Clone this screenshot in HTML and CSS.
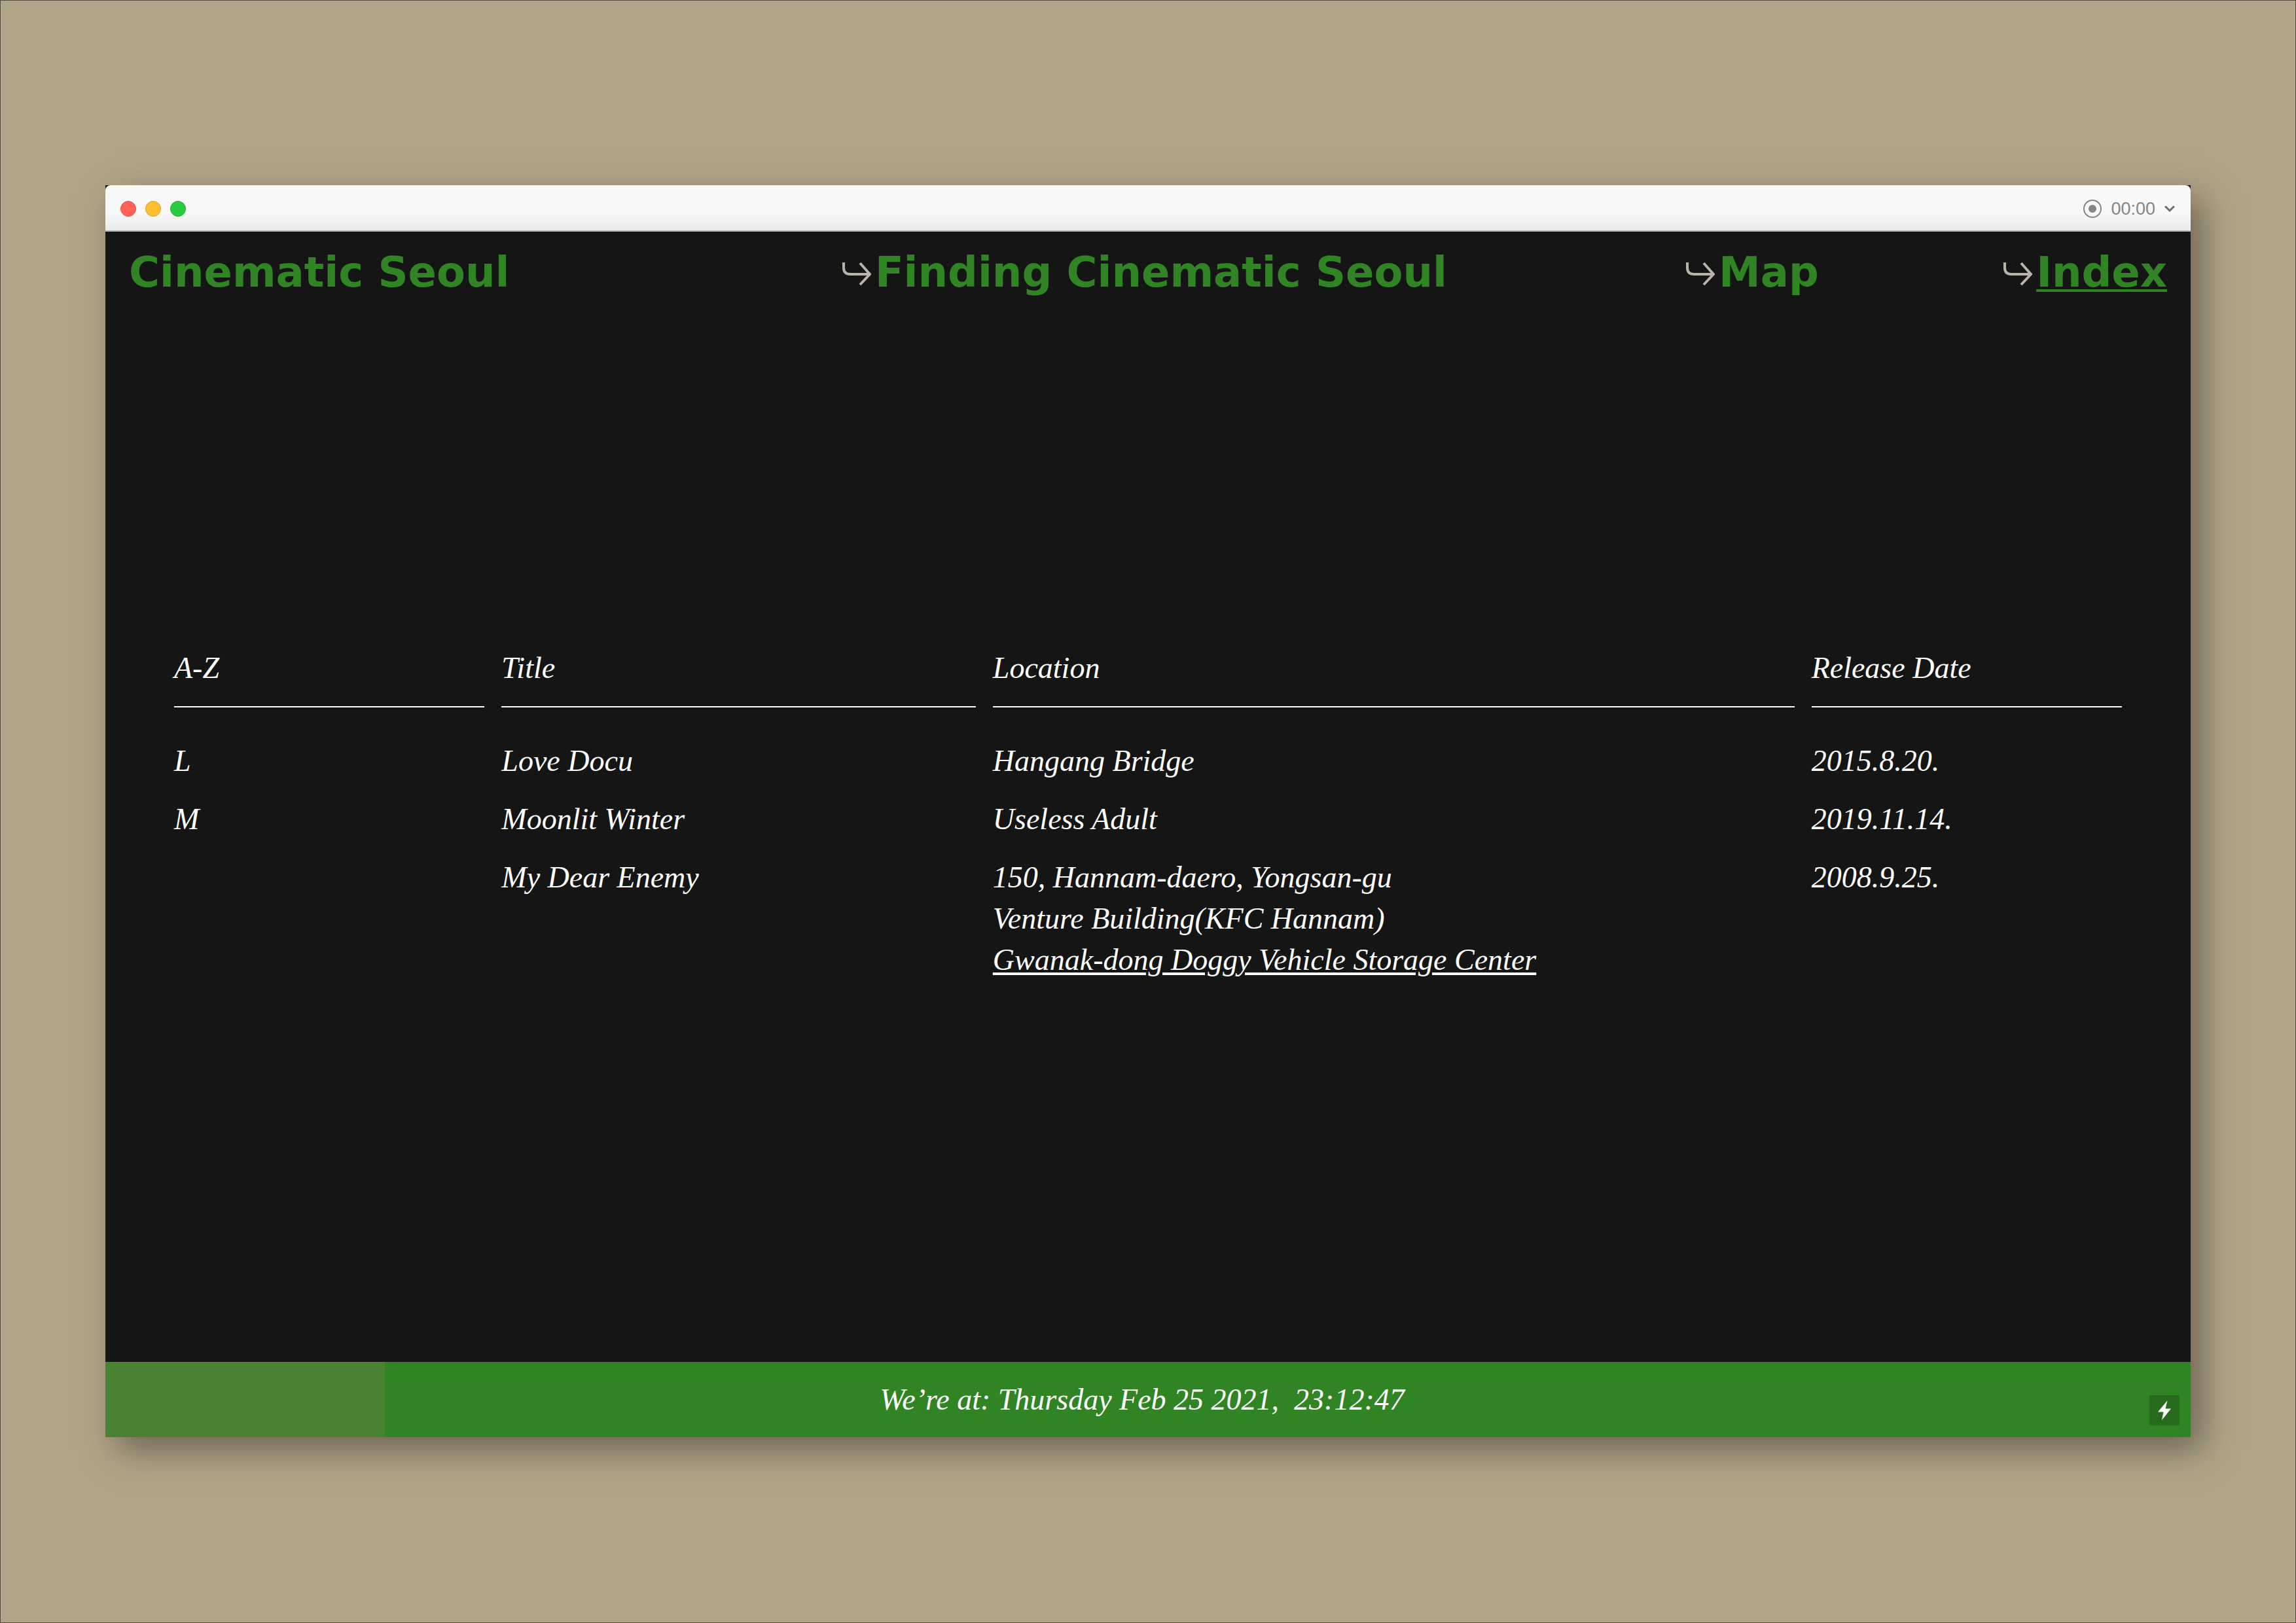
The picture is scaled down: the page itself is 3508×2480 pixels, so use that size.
FILE: index.html
```html
<!DOCTYPE html>
<html lang="en">
<head>
<meta charset="utf-8">
<title>Cinematic Seoul – Index</title>
<link rel="stylesheet" href="styles.css">
</head>
<body>
<div class="window">
  <div class="titlebar">
    <div class="lights">
      <span class="light light-close"></span>
      <span class="light light-minimize"></span>
      <span class="light light-zoom"></span>
    </div>
    <div class="recorder">
      <svg class="record-icon" viewBox="0 0 28 28" aria-hidden="true"><circle cx="14" cy="14" r="13" fill="none" stroke="#858585" stroke-width="2"/><circle cx="14" cy="14" r="6" fill="#858585"/></svg>
      <span class="time">00:00</span>
      <svg class="chevron" viewBox="0 0 16 10" aria-hidden="true"><path d="M2 2l6 6 6-6" fill="none" stroke="#6b6b6b" stroke-width="3" stroke-linecap="round" stroke-linejoin="round"/></svg>
    </div>
  </div>
  <div class="page">
    <nav class="nav">
      <a class="nav-link brand" href="#home">Cinematic Seoul</a>
      <div class="nav-item">
        <svg class="arrow" viewBox="0 0 44 38" aria-hidden="true"><path d="M2 2v8q0 10 10 10h29M27 3l15 17-15 16"/></svg>
        <a class="nav-link" href="#finding">Finding Cinematic Seoul</a>
      </div>
      <div class="nav-item">
        <svg class="arrow" viewBox="0 0 44 38" aria-hidden="true"><path d="M2 2v8q0 10 10 10h29M27 3l15 17-15 16"/></svg>
        <a class="nav-link" href="#map">Map</a>
      </div>
      <div class="nav-item">
        <svg class="arrow" viewBox="0 0 44 38" aria-hidden="true"><path d="M2 2v8q0 10 10 10h29M27 3l15 17-15 16"/></svg>
        <a class="nav-link current" href="#index" aria-current="page">Index</a>
      </div>
    </nav>
    <main class="main">
      <table class="films">
        <thead>
          <tr class="row head">
            <th class="letter" scope="col">A-Z</th>
            <th class="title" scope="col">Title</th>
            <th class="location" scope="col">Location</th>
            <th class="date" scope="col">Release Date</th>
          </tr>
        </thead>
        <tbody>
          <tr class="row">
            <td class="letter">L</td>
            <td class="title">Love Docu</td>
            <td class="location">Hangang Bridge</td>
            <td class="date">2015.8.20.</td>
          </tr>
          <tr class="row">
            <td class="letter">M</td>
            <td class="title">Moonlit Winter</td>
            <td class="location">Useless Adult</td>
            <td class="date">2019.11.14.</td>
          </tr>
          <tr class="row">
            <td class="letter"></td>
            <td class="title">My Dear Enemy</td>
            <td class="location">150, Hannam-daero, Yongsan-gu<br>Venture Building(KFC Hannam)<br><a class="place" href="#gwanak">Gwanak-dong Doggy Vehicle Storage Center</a></td>
            <td class="date">2008.9.25.</td>
          </tr>
        </tbody>
      </table>
    </main>
    <footer class="footer">
      <div class="progress"></div>
      <p class="clock">We’re at: Thursday Feb 25 2021,&nbsp; 23:12:47</p>
      <button class="flash" type="button" aria-label="Toggle flash"><svg class="bolt" viewBox="0 0 20 30" aria-hidden="true"><path d="M14.500 0L0 17.500h8.500L6 30 20 12.500h-8.500z" fill="#fff"/></svg></button>
    </footer>
  </div>
</div>
</body>
</html>
```

FILE: styles.css
```css
* {
  box-sizing: border-box;
}

body {
  margin: 0;
  min-height: 100vh;
  padding: 282px 160px 283px;
  display: flex;
  background: #b0a588;
  border: 1px solid #514b40;
}

.window {
  flex: 1;
  display: flex;
  flex-direction: column;
  background: #151515;
  box-shadow: 18px 20px 48px rgba(70, 60, 52, 0.6);
}

.titlebar {
  height: 71px;
  padding: 2px 24px 0 23px;
  display: flex;
  align-items: center;
  justify-content: space-between;
  background: linear-gradient(#f8f8f8 60%, #ebebeb);
  border-bottom: 2px solid #b5b4aa;
  border-radius: 8px 8px 0 0;
}

.lights {
  display: flex;
  gap: 14px;
}

.light {
  width: 24px;
  height: 24px;
  border-radius: 50%;
}

.light-close {
  background: #ff6058;
  border: 1px solid #e2504a;
}

.light-minimize {
  background: #ffbf2f;
  border: 1px solid #dfa023;
}

.light-zoom {
  background: #29cc41;
  border: 1px solid #1bac2c;
}

.recorder {
  display: flex;
  align-items: center;
  gap: 14px;
  color: #858585;
  font: 27px/30px "Liberation Sans", Arial, sans-serif;
}

.record-icon {
  width: 28px;
  height: 28px;
}

.chevron {
  width: 16px;
  height: 10px;
}

.page {
  flex: 1;
  display: flex;
  flex-direction: column;
  color: #fff;
  font: italic 46px/63px "Liberation Serif", "Times New Roman", serif;
}

.nav {
  padding: 30px 36px 34px;
  display: grid;
  grid-template-columns: 35% 41.4% 1fr auto;
  font: bold 64px/64px "DejaVu Sans", Verdana, sans-serif;
}

.nav-item {
  display: flex;
  align-items: center;
  gap: 6px;
}

.arrow {
  width: 44px;
  height: 38px;
  margin-top: 4px;
  fill: none;
  stroke: #b8b4a8;
  stroke-width: 4;
}

.nav-link {
  color: #308424;
  text-decoration: none;
}

.current {
  text-decoration: underline;
  text-decoration-thickness: 4px;
  text-decoration-skip-ink: none;
  text-underline-offset: 4px;
}

.main {
  flex: 1;
  padding: 507px 105px 0;
}

.films,
.films thead,
.films tbody {
  display: block;
}

.films tbody {
  padding-top: 50px;
}

.row {
  display: grid;
  grid-template-columns: repeat(12, 1fr);
  column-gap: 26px;
  margin-bottom: 26px;
}

.head {
  margin-bottom: 0;
}

th,
td {
  padding: 0;
  text-align: left;
  font-weight: normal;
}

th {
  padding-bottom: 27px;
  border-bottom: 2px solid #fff;
}

.letter,
.date {
  grid-column: span 2;
}

.title {
  grid-column: span 3;
}

.location {
  grid-column: span 5;
}

.place {
  color: inherit;
  text-decoration: underline;
  text-decoration-thickness: 4px;
  text-underline-offset: 4px;
}

.footer {
  position: relative;
  height: 115px;
  padding-right: 18px;
  display: flex;
  align-items: center;
  justify-content: center;
  background: #308424;
}

.progress {
  position: absolute;
  inset: 0 auto 0 0;
  width: 13.4%;
  background: #488232;
}

.clock {
  margin: 0;
}

.flash {
  position: absolute;
  right: 17px;
  bottom: 18px;
  width: 46px;
  height: 46px;
  padding: 0;
  display: flex;
  align-items: center;
  justify-content: center;
  background: #296b1e;
  border: 0;
}

.bolt {
  width: 20px;
  height: 30px;
}
```
